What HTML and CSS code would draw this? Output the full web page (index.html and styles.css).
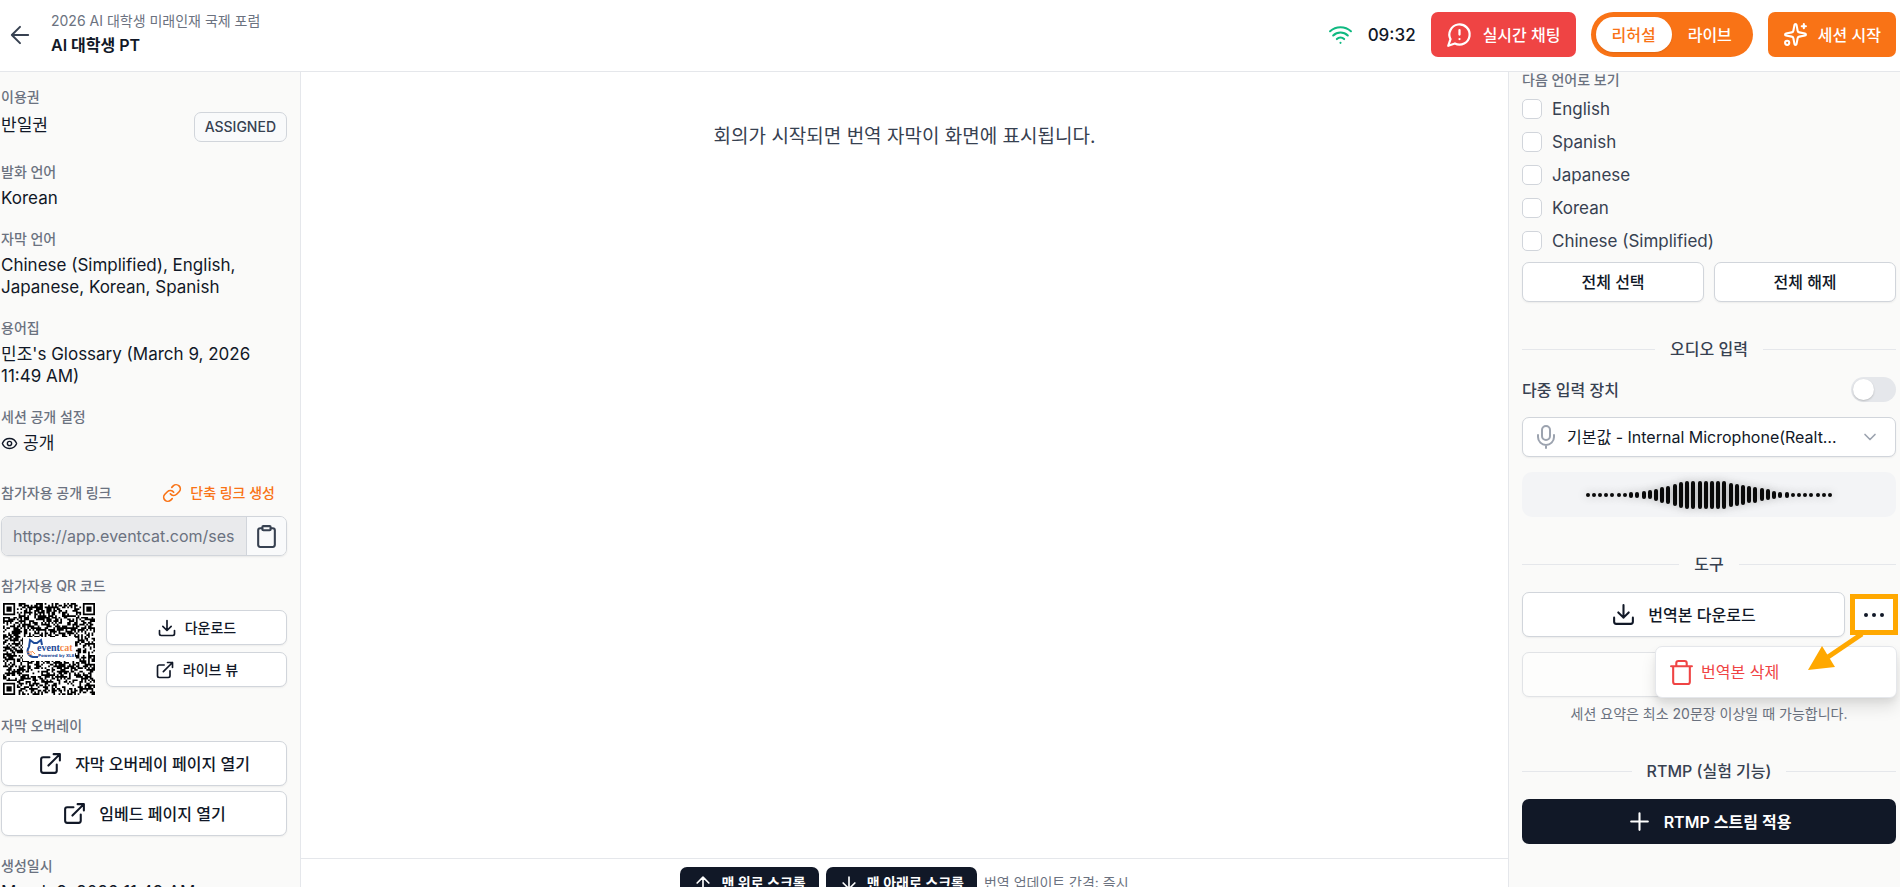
FILE: index.html
```html
<!DOCTYPE html>
<html lang="ko">
<head>
<meta charset="utf-8">
<title>AI 대학생 PT</title>
<link rel="stylesheet" href="styles.css">
</head>
<body>
<svg class="sprite" aria-hidden="true">
  <symbol id="download" viewBox="0 0 24 24"><path d="M21 15v4a2 2 0 0 1-2 2H5a2 2 0 0 1-2-2v-4M7 10l5 5 5-5M12 15V3"/></symbol>
  <symbol id="external" viewBox="0 0 24 24"><path d="M18 13v6a2 2 0 0 1-2 2H5a2 2 0 0 1-2-2V8a2 2 0 0 1 2-2h6M15 3h6v6M10 14 21 3"/></symbol>
</svg>

<header class="topbar">
  <a class="back" href="#" aria-label="뒤로"><svg class="icon icon-back" viewBox="0 0 24 24"><path d="m12 19-7-7 7-7M19 12H5"/></svg></a>
  <div class="titles">
    <p class="event-name">2026 AI 대학생 미래인재 국제 포럼</p>
    <h1 class="session-name">AI 대학생 PT</h1>
  </div>
  <div class="top-actions">
    <svg class="icon icon-lg wifi" viewBox="0 0 24 24"><path d="M12 20h.01M2 8.82a15 15 0 0 1 20 0M5 12.86a10 10 0 0 1 14 0M8.500 16.430a5 5 0 0 1 7 0"/></svg>
    <time class="clock">09:32</time>
    <button class="btn btn-red" type="button"><svg class="icon icon-xl" viewBox="0 0 24 24"><path d="M7.900 20A9 9 0 1 0 4 16.100L2 22ZM12 8v4M12 16h.01"/></svg>실시간 채팅</button>
    <div class="mode">
      <button class="mode-item mode-active" type="button">리허설</button>
      <button class="mode-item" type="button">라이브</button>
    </div>
    <button class="btn btn-orange" type="button"><svg class="icon icon-lg" viewBox="0 0 24 24"><path d="M11.017 2.814a1 1 0 0 1 1.966 0l1.051 5.558a2 2 0 0 0 1.594 1.594l5.558 1.051a1 1 0 0 1 0 1.966l-5.558 1.051a2 2 0 0 0-1.594 1.594l-1.051 5.558a1 1 0 0 1-1.966 0l-1.051-5.558a2 2 0 0 0-1.594-1.594l-5.558-1.051a1 1 0 0 1 0-1.966l5.558-1.051a2 2 0 0 0 1.594-1.594zM20 2v4M22 4h-4"/><circle cx="4" cy="20" r="2"/></svg>세션 시작</button>
  </div>
</header>

<div class="workspace">
  <aside class="info">
    <section class="field">
      <h2 class="label">이용권</h2>
      <div class="pass"><p class="value">반일권</p><span class="badge">ASSIGNED</span></div>
    </section>
    <section class="field"><h2 class="label">발화 언어</h2><p class="value">Korean</p></section>
    <section class="field"><h2 class="label">자막 언어</h2><p class="value">Chinese (Simplified), English, Japanese, Korean, Spanish</p></section>
    <section class="field"><h2 class="label">용어집</h2><p class="value">민조's Glossary (March 9, 2026 11:49 AM)</p></section>
    <section class="field">
      <h2 class="label">세션 공개 설정</h2>
      <p class="value with-icon"><svg class="icon icon-sm" viewBox="0 0 24 24"><path d="M2.062 12.348a1 1 0 0 1 0-.696 10.750 10.750 0 0 1 19.876 0 1 1 0 0 1 0 .696 10.750 10.750 0 0 1-19.876 0"/><circle cx="12" cy="12" r="3"/></svg>공개</p>
    </section>
    <section class="field">
      <div class="link-head">
        <label class="label" for="public-link">참가자용 공개 링크</label>
        <button class="link-btn" type="button"><svg class="icon icon-md" viewBox="0 0 24 24"><path d="M10 13a5 5 0 0 0 7.540.540l3-3a5 5 0 0 0-7.070-7.070l-1.720 1.710M14 11a5 5 0 0 0-7.540-.540l-3 3a5 5 0 0 0 7.070 7.070l1.710-1.710"/></svg>단축 링크 생성</button>
      </div>
      <div class="copy-row">
        <input class="copy-input" id="public-link" type="text" readonly value="https://app.eventcat.com/session/live">
        <button class="copy-btn" type="button" aria-label="복사"><svg class="icon icon-lg" viewBox="0 0 24 24"><rect x="8" y="2" width="8" height="4" rx="1"/><path d="M16 4h2a2 2 0 0 1 2 2v14a2 2 0 0 1-2 2H6a2 2 0 0 1-2-2V6a2 2 0 0 1 2-2h2"/></svg></button>
      </div>
    </section>
    <section class="field">
      <h2 class="label">참가자용 QR 코드</h2>
      <div class="qr-row">
        <svg class="qr" viewBox="0 0 95 95" role="img" aria-label="QR 코드">
          <rect width="95" height="95" fill="#fff"/>
          <path id="qr-modules" transform="translate(2 2) scale(1.736)" fill="#000"/>
          <rect x="22" y="36" width="52" height="24" fill="#fff"/>
          <path d="M28 46l1-7 4 3h3l4-3 1 5M28 46c-3 4-1 9 4 10h5" fill="none" stroke="#1f4b99" stroke-width="2"/>
          <path d="M26 51h5M27 54l4-1M31 50l3 3" fill="none" stroke="#f58a4b" stroke-width="1"/>
          <text class="qr-brand" x="36" y="50" fill="#1f4b99">event<tspan fill="#f58a4b">cat</tspan></text>
          <text class="qr-note" x="37" y="56" fill="#1f4b99">Powered by XL8</text>
        </svg>
        <div class="qr-actions">
          <button class="btn btn-outline btn-small" type="button"><svg class="icon icon-md"><use href="#download"/></svg>다운로드</button>
          <button class="btn btn-outline btn-small" type="button"><svg class="icon icon-md"><use href="#external"/></svg>라이브 뷰</button>
        </div>
      </div>
    </section>
    <section class="field">
      <h2 class="label">자막 오버레이</h2>
      <button class="btn btn-outline" type="button"><svg class="icon icon-lg"><use href="#external"/></svg>자막 오버레이 페이지 열기</button>
      <button class="btn btn-outline" type="button"><svg class="icon icon-lg"><use href="#external"/></svg>임베드 페이지 열기</button>
    </section>
    <section class="field"><h2 class="label">생성일시</h2><p class="value">March 9, 2026 11:49 AM</p></section>
  </aside>

  <main class="stage">
    <p class="notice">회의가 시작되면 번역 자막이 화면에 표시됩니다.</p>
    <footer class="stage-footer">
      <button class="btn btn-dark btn-small" type="button"><svg class="icon icon-md" viewBox="0 0 24 24"><path d="m5 12 7-7 7 7M12 19V5"/></svg>맨 위로 스크롤</button>
      <button class="btn btn-dark btn-small" type="button"><svg class="icon icon-md" viewBox="0 0 24 24"><path d="M12 5v14M19 12l-7 7-7-7"/></svg>맨 아래로 스크롤</button>
      <span class="interval">번역 업데이트 간격: 즉시</span>
    </footer>
  </main>

  <aside class="controls">
    <fieldset class="languages">
      <legend class="label legend">다음 언어로 보기</legend>
      <label class="check"><input type="checkbox">English</label>
      <label class="check"><input type="checkbox">Spanish</label>
      <label class="check"><input type="checkbox">Japanese</label>
      <label class="check"><input type="checkbox">Korean</label>
      <label class="check"><input type="checkbox">Chinese (Simplified)</label>
      <div class="pair">
        <button class="btn btn-outline btn-medium" type="button">전체 선택</button>
        <button class="btn btn-outline btn-medium" type="button">전체 해제</button>
      </div>
    </fieldset>

    <section class="group">
      <h2 class="divider">오디오 입력</h2>
      <label class="switch-row">다중 입력 장치<input class="switch" type="checkbox" role="switch"></label>
      <div class="mic">
        <svg class="icon mic-icon" viewBox="0 0 24 24"><rect x="8" y="1" width="8" height="14" rx="4"/><path d="M20 10v2a8 8 0 0 1-16 0v-2M12 20v3"/></svg>
        <select class="mic-select" aria-label="오디오 입력 장치"><option>기본값 - Internal Microphone(Realtek(R) Audio)</option></select>
        <svg class="icon mic-chevron" viewBox="0 0 24 24"><path d="m6 9 6 6 6-6"/></svg>
      </div>
      <div class="meter"><div class="bars" id="bars"></div></div>
    </section>

    <section class="group">
      <h2 class="divider">도구</h2>
      <div class="tools">
        <button class="btn btn-outline grow" type="button"><svg class="icon icon-lg"><use href="#download"/></svg>번역본 다운로드</button>
        <button class="more" type="button" aria-label="더보기"><svg class="dots" viewBox="0 0 20 6"><circle cx="2" cy="3" r="2"/><circle cx="10" cy="3" r="2"/><circle cx="18" cy="3" r="2"/></svg></button>
        <div class="menu"><button class="menu-item" type="button"><svg class="icon icon-lg" viewBox="0 0 24 24"><path d="M2 6h20M20 6v15a2 2 0 0 1-2 2H6a2 2 0 0 1-2-2V6M7 6V3a2 2 0 0 1 2-2h6a2 2 0 0 1 2 2v3"/></svg>번역본 삭제</button></div>
        <svg class="pointer" viewBox="0 0 60 42"><path d="M54 2 20 25" stroke="#ffa800" stroke-width="5"/><path d="M0 38 14 14 27 35Z" fill="#ffa800"/></svg>
      </div>
      <div class="summary">
        <button class="btn btn-outline summary-btn" type="button" disabled aria-label="세션 요약"></button>
        <p class="hint">세션 요약은 최소 20문장 이상일 때 가능합니다.</p>
      </div>
    </section>

    <section class="group">
      <h2 class="divider">RTMP (실험 기능)</h2>
      <button class="btn btn-dark" type="button"><svg class="icon icon-lg" viewBox="0 0 24 24"><path d="M12 4v16M4 12h16"/></svg>RTMP 스트림 적용</button>
    </section>
  </aside>
</div>
<script src="app.js"></script>
</body>
</html>
```
FILE: styles.css
```css
* { box-sizing: border-box; }
body {
  margin: 0;
  height: 100vh;
  overflow: hidden;
  display: flex;
  flex-direction: column;
  background: #fff;
  color: #111827;
  font: 500 16px/22px Inter, "Noto Sans CJK KR", sans-serif;
}
h1, h2, p { margin: 0; font-size: inherit; font-weight: inherit; }
button, input, select { font: inherit; color: inherit; }
button { cursor: pointer; }
.sprite { position: absolute; width: 0; height: 0; }
.icon { flex: none; fill: none; stroke: currentColor; stroke-width: 2; stroke-linecap: round; stroke-linejoin: round; }
.icon-sm { width: 17px; height: 17px; }
.icon-md { width: 20px; height: 20px; }
.icon-lg { width: 25px; height: 25px; }
.icon-xl { width: 27px; height: 27px; }
.icon-back { width: 28px; height: 28px; stroke-width: 1.700; }

/* Header */
.topbar {
  flex: none;
  display: flex;
  align-items: center;
  min-height: 72px;
  padding: 0 4px 2px 6px;
  border-bottom: 1px solid #e5e7eb;
}
.back { display: flex; color: #374151; }
.titles { margin: 0 0 3px 17px; }
.event-name { font-size: 14px; font-weight: 400; line-height: 24px; color: #6b7280; }
.session-name { font-weight: 600; line-height: 24px; }
.top-actions { margin-left: auto; display: flex; align-items: center; gap: 15px; }
.wifi { color: #10b981; }
.clock { font-size: 17px; }

.btn {
  display: flex;
  align-items: center;
  justify-content: center;
  gap: 12px;
  height: 45px;
  padding: 0 14px;
  border: 1px solid transparent;
  border-radius: 7px;
  white-space: nowrap;
}
.btn-red { gap: 10px; background: #ef4444; color: #fff; }
.btn-orange { gap: 10px; background: #f97316; color: #fff; }
.btn-dark { background: #111827; color: #fff; font-weight: 600; }
.btn-outline { background: #fff; border-color: #d1d5db; box-shadow: 0 1px 2px rgba(0, 0, 0, .06); }
.btn-medium { height: 40px; }
.btn-small { height: 35px; gap: 8px; font-size: 14px; }
.mode { display: flex; height: 45px; padding: 5px; border-radius: 23px; background: #f97316; }
.mode-item { border: 0; border-radius: 18px; padding: 0 16px; background: none; color: #fff; }
.mode-active { background: #fff; color: #f97316; box-shadow: 0 1px 2px rgba(0, 0, 0, .1); }

/* Columns */
.workspace { flex: 1; min-height: 0; display: grid; grid-template-columns: 301px minmax(0, 1fr) 392px; }
.info, .controls { min-height: 0; overflow: hidden; background: #fafaf9; }
.info {
  display: flex;
  flex-direction: column;
  gap: 20px;
  padding: 15px 13px 0 1px;
  border-right: 1px solid #e5e7eb;
}
.field { flex: none; display: flex; flex-direction: column; gap: 5px; }
.label { font-size: 14px; line-height: 20px; color: #6b7280; }
.value { font-size: 17px; font-weight: 400; }
.pass { display: flex; justify-content: space-between; }
.pass .value { padding-top: 2px; }
.badge { padding: 4px 10px; border: 1px solid #d1d5db; border-radius: 7px; background: #f9fafb; color: #374151; font-size: 14px; line-height: 20px; }
.with-icon { display: flex; align-items: center; gap: 5px; }
.link-head { display: flex; align-items: center; justify-content: space-between; height: 37px; }
.link-btn { display: flex; align-items: center; gap: 8px; padding: 0 12px; border: 0; background: none; color: #f97316; font-size: 14px; }
.copy-row { display: flex; height: 40px; border: 1px solid #d1d5db; border-radius: 7px; overflow: hidden; box-shadow: 0 1px 2px rgba(0, 0, 0, .08); }
.copy-input { flex: 1; min-width: 0; padding: 0 11px; border: 0; background: #e9eaec; color: #6b7280; font-weight: 400; }
.copy-btn { display: flex; align-items: center; justify-content: center; width: 40px; padding: 0; border: 0; border-left: 1px solid #d1d5db; background: #f9fafb; color: #374151; }
.qr-row { display: flex; align-items: center; gap: 10px; }
.qr { flex: none; width: 95px; height: 95px; }
.qr-brand { font: 700 10px "Liberation Serif", serif; }
.qr-note { font: 700 4px "DejaVu Sans", sans-serif; }
.qr-actions { flex: 1; display: flex; flex-direction: column; gap: 7px; }

.stage { display: flex; flex-direction: column; min-width: 0; min-height: 0; }
.notice { padding: 52px 24px 0; text-align: center; font-size: 19px; line-height: 26px; font-weight: 400; color: #374151; }
.stage-footer {
  flex: none;
  display: flex;
  justify-content: center;
  align-items: flex-start;
  gap: 7px;
  height: 29px;
  margin-top: auto;
  padding-top: 8px;
  border-top: 1px solid #e5e7eb;
  overflow: hidden;
}
.stage-footer .btn { height: 32px; padding: 0 12px; }
.interval { font-size: 14px; line-height: 32px; font-weight: 400; color: #6b7280; }

/* Right column */
.controls { display: flex; flex-direction: column; gap: 35px; padding: 0 4px 0 13px; border-left: 1px solid #e5e7eb; }
.languages { display: flex; flex-direction: column; gap: 9px; min-width: 0; margin: 0; padding: 0; border: 0; }
.legend { padding: 0; margin-bottom: 9px; line-height: 16px; }
.check { display: flex; align-items: center; gap: 10px; height: 24px; color: #374151; font-size: 17px; font-weight: 400; }
.check input { appearance: none; width: 20px; height: 20px; margin: 0; border: 1px solid #d1d5db; border-radius: 5px; background: #fff; }
.pair { display: grid; grid-template-columns: 1fr 1fr; gap: 10px; }
.group { display: flex; flex-direction: column; gap: 15px; }
.divider { display: flex; align-items: center; gap: 15px; line-height: 25px; color: #374151; }
.divider::before, .divider::after { content: ""; flex: 1; border-top: 1px solid #e5e7eb; }
.switch-row { display: flex; align-items: center; justify-content: space-between; height: 25px; color: #374151; }
.switch { appearance: none; width: 45px; height: 25px; margin: 0; padding: 2px; border-radius: 13px; background: #e5e7eb; }
.switch::before { content: ""; display: block; width: 21px; height: 21px; border-radius: 50%; background: #fff; box-shadow: 0 1px 2px rgba(0, 0, 0, .2); }
.mic { display: grid; align-items: center; }
.mic > * { grid-area: 1 / 1; }
.mic-icon { z-index: 1; width: 24px; height: 24px; margin-left: 12px; color: #9ca3af; pointer-events: none; }
.mic-chevron { justify-self: end; width: 20px; height: 20px; margin-right: 16px; color: #9ca3af; pointer-events: none; }
.mic-select {
  appearance: none;
  width: 100%;
  height: 40px;
  padding: 0 52px 0 44px;
  border: 1px solid #d1d5db;
  border-radius: 7px;
  background: #fff;
  font-weight: 400;
  text-overflow: ellipsis;
  box-shadow: 0 1px 2px rgba(0, 0, 0, .06);
}
.meter { display: flex; justify-content: center; align-items: center; height: 45px; border-radius: 10px; background: #f3f4f6; }
.bars { display: flex; align-items: center; justify-content: space-between; width: 66%; }
.bar { width: 4px; border-radius: 2px; background: #0a0a0a; box-shadow: 0 0 10px rgba(0, 0, 0, .3); }
.tools { position: relative; display: flex; align-items: center; gap: 5px; }
.grow { flex: 1; }
.more { display: flex; align-items: center; justify-content: center; width: 48px; height: 41px; margin-right: -2px; padding: 0; border: 5px solid #ffa800; background: #fff; }
.dots { width: 20px; height: 6px; fill: #111827; }
.menu {
  position: absolute;
  z-index: 1;
  top: 54px;
  right: -1px;
  width: 242px;
  padding: 5px;
  border: 1px solid #e5e7eb;
  border-radius: 7px;
  background: #fff;
  box-shadow: 0 10px 15px rgba(0, 0, 0, .1), 0 4px 6px rgba(0, 0, 0, .05);
}
.menu-item { display: flex; align-items: center; gap: 7px; width: 100%; height: 40px; padding: 0 8px; border: 0; background: none; color: #ef4444; font-weight: 400; }
.pointer { position: absolute; z-index: 2; top: 40px; right: 28px; width: 60px; height: 42px; }
.summary { display: flex; flex-direction: column; gap: 7px; }
.summary-btn { opacity: .6; }
.hint { text-align: center; font-size: 14px; line-height: 20px; font-weight: 400; color: #6b7280; }
```
FILE: app.js
```js
// Input level meter
const levels = [4, 4, 4, 4, 4, 4, 4, 6, 6, 8, 9, 12, 16, 18, 22, 26, 28, 28, 28, 28,
  28, 28, 28, 24, 22, 20, 17, 16, 13, 11, 8, 6, 6, 4, 4, 4, 4, 4, 4, 4];
const bars = document.getElementById('bars');
for (const level of levels) {
  const bar = document.createElement('span');
  bar.className = 'bar';
  bar.style.height = level + 'px';
  bars.append(bar);
}

// QR modules: three finder squares plus a seeded data field
const size = 53;
let seed = 20260309;
const next = () => (seed = (seed * 1103515245 + 12345) % 2147483648) / 2147483648;
const finder = (x, y) => {
  const fx = x < 8 ? x : x > size - 9 ? size - 1 - x : -1;
  const fy = y < 8 ? y : y > size - 9 ? size - 1 - y : -1;
  if (fx < 0 || fy < 0 || (x > 8 && y > 8)) return null;
  if (fx > 6 || fy > 6) return false;
  const ring = Math.max(Math.abs(fx - 3), Math.abs(fy - 3));
  return ring !== 2;
};
let d = '';
for (let y = 0; y < size; y++) {
  for (let x = 0; x < size; x++) {
    const data = next() < 0.52;
    const mark = finder(x, y);
    if (mark === null ? data : mark) d += `M${x} ${y}h1v1h-1z`;
  }
}
document.getElementById('qr-modules').setAttribute('d', d);
```
